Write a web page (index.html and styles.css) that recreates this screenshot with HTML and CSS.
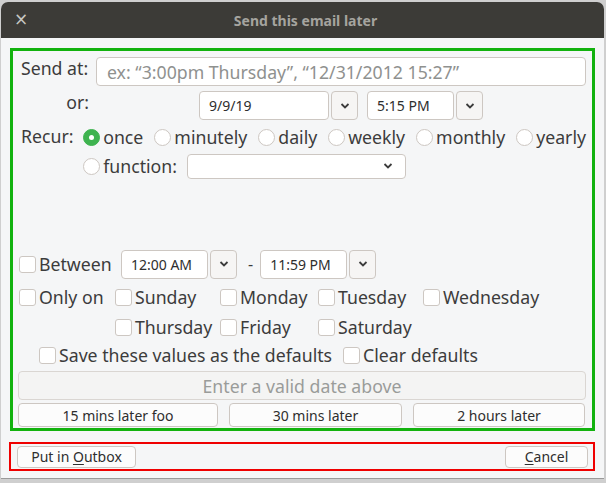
FILE: index.html
```html
<!DOCTYPE html>
<html>
<head>
<meta charset="utf-8">
<link rel="stylesheet" href="styles.css">
</head>
<body>
<div class="window">
  <div class="titlebar">
    <span class="close">×</span>
    <span class="title">Send this email later</span>
  </div>
  <div class="content">
    <div class="green">
      <div class="row row-send">
        <span class="lbl lbl-send">Send at:</span>
        <div class="entry entry-wide"><span class="placeholder">ex: “3:00pm Thursday”, “12/31/2012 15:27”</span></div>
      </div>
      <div class="row row-or">
        <span class="lbl lbl-or">or:</span>
        <div class="combo-group date-group">
          <div class="entry entry-date">9/9/19</div>
          <div class="drop"><svg width="10" height="6" viewBox="0 0 10 6"><path d="M1.5 1 L5 4.5 L8.5 1" fill="none" stroke="#3c3c3c" stroke-width="1.8"/></svg></div>
        </div>
        <div class="combo-group time-group">
          <div class="entry entry-time">5:15 PM</div>
          <div class="drop"><svg width="10" height="6" viewBox="0 0 10 6"><path d="M1.5 1 L5 4.5 L8.5 1" fill="none" stroke="#3c3c3c" stroke-width="1.8"/></svg></div>
        </div>
      </div>
      <div class="row row-recur">
        <span class="lbl lbl-recur">Recur:</span>
        <div class="radios">
          <div class="radio-line">
            <label class="opt"><span class="radio checked"></span><span>once</span></label>
            <label class="opt"><span class="radio"></span><span>minutely</span></label>
            <label class="opt"><span class="radio"></span><span>daily</span></label>
            <label class="opt"><span class="radio"></span><span>weekly</span></label>
            <label class="opt"><span class="radio"></span><span>monthly</span></label>
            <label class="opt"><span class="radio"></span><span>yearly</span></label>
          </div>
          <div class="radio-line line2">
            <label class="opt"><span class="radio"></span><span>function:</span></label>
            <div class="combo-box"><svg width="10" height="6" viewBox="0 0 10 6"><path d="M1.5 1 L5 4.5 L8.5 1" fill="none" stroke="#3c3c3c" stroke-width="1.8"/></svg></div>
          </div>
        </div>
      </div>
      <div class="spacer"></div>
      <div class="row row-between">
        <label class="opt chk-opt"><span class="check"></span><span>Between</span></label>
        <div class="combo-group between-a">
          <div class="entry entry-time small">12:00 AM</div>
          <div class="drop"><svg width="10" height="6" viewBox="0 0 10 6"><path d="M1.5 1 L5 4.5 L8.5 1" fill="none" stroke="#3c3c3c" stroke-width="1.8"/></svg></div>
        </div>
        <span class="dash">-</span>
        <div class="combo-group">
          <div class="entry entry-time small">11:59 PM</div>
          <div class="drop"><svg width="10" height="6" viewBox="0 0 10 6"><path d="M1.5 1 L5 4.5 L8.5 1" fill="none" stroke="#3c3c3c" stroke-width="1.8"/></svg></div>
        </div>
      </div>
      <div class="days">
        <label class="opt"><span class="check"></span><span>Only on</span></label>
        <label class="opt"><span class="check"></span><span>Sunday</span></label>
        <label class="opt"><span class="check"></span><span>Monday</span></label>
        <label class="opt"><span class="check"></span><span>Tuesday</span></label>
        <label class="opt"><span class="check"></span><span>Wednesday</span></label>
        <span></span>
        <label class="opt"><span class="check"></span><span>Thursday</span></label>
        <label class="opt"><span class="check"></span><span>Friday</span></label>
        <label class="opt"><span class="check"></span><span>Saturday</span></label>
        <span></span>
      </div>
      <div class="row row-save">
        <label class="opt"><span class="check"></span><span>Save these values as the defaults</span></label>
        <label class="opt"><span class="check"></span><span>Clear defaults</span></label>
      </div>
      <div class="btn btn-disabled"><span>Enter a valid date above</span></div>
      <div class="row row-quick">
        <div class="btn btn-quick q1"><span>15 mins later foo</span></div>
        <div class="btn btn-quick q2"><span>30 mins later</span></div>
        <div class="btn btn-quick q3"><span>2 hours later</span></div>
      </div>
    </div>
    <div class="red">
      <div class="btn btn-action outbox"><span>Put in <u>O</u>utbox</span></div>
      <div class="btn btn-action cancel"><span><u>C</u>ancel</span></div>
    </div>
  </div>
</div>
</body>
</html>
```

FILE: styles.css
```css
* { box-sizing: border-box; }
html, body { margin: 0; padding: 0; }
body {
  width: 606px;
  height: 483px;
  background: #cfcfcf;
  font-family: "Noto Sans", "Open Sans", sans-serif;
  color: #3c3c3c;
  overflow: hidden;
  padding: 2px 2px 0 1px;
}
.window {
  width: 603px;
  height: 476px;
  background: #f5f6f7;
  border-radius: 7px 7px 0 0;
  overflow: hidden;
  display: flex;
  flex-direction: column;
  box-shadow: 0 1px 0 #9a9a9a;
}
.titlebar {
  height: 36px;
  background: #3c3b37;
  display: flex;
  align-items: center;
  justify-content: center;
  position: relative;
}
.close {
  position: absolute;
  left: 13px;
  top: 7px;
  color: #c8c7c3;
  font-size: 17px;
  font-family: "DejaVu Sans", sans-serif;
}
.title {
  color: #a5a49f;
  font-weight: bold;
  font-size: 14px;
  margin-left: 6px;
  margin-top: 1px;
}
.content {
  padding: 10px 8px 0 9px;
}
.green {
  border: 3px solid #12b20e;
  width: 585px;
  height: 383px;
  padding: 6px 6px 0 5px;
  display: flex;
  flex-direction: column;
}
.row { display: flex; align-items: flex-start; }
.lbl { font-size: 17.7px; }
.lbl-send { width: 78px; padding-left: 3px; line-height: 22px; }
.entry {
  background: #fff;
  border: 1px solid #cdc7c2;
  border-radius: 4px;
  height: 29px;
  display: flex;
  align-items: center;
  font-size: 14px;
  padding-left: 9px;
  color: #2e2e2e;
}
.entry-wide { flex: 1; padding-left: 10px; }
.placeholder { color: #8f918f; font-size: 17.7px; }
.row-or { margin-top: 5px; }
.lbl-or { width: 71px; text-align: right; line-height: 22px; }
.combo-group { display: flex; gap: 2px; }
.date-group { margin-left: 110px; }
.time-group { margin-left: 9px; }
.entry-date { width: 130px; }
.entry-time { width: 87px; }
.drop {
  width: 27px;
  height: 29px;
  border: 1px solid #cdc7c2;
  border-radius: 4px;
  background: #f6f5f4;
  display: flex;
  align-items: center;
  justify-content: center;
}
.row-recur { margin-top: 6px; }
.lbl-recur { width: 67px; padding-left: 3px; line-height: 20px; }
.radios { display: flex; flex-direction: column; }
.radio-line { display: flex; align-items: center; gap: 11px; height: 22px; }
.line2 { margin-top: 5px; height: 26px; gap: 10px; }
.opt {
  display: flex;
  align-items: center;
  font-size: 17.7px;
  white-space: nowrap;
}
.radio {
  width: 17px;
  height: 17px;
  border-radius: 50%;
  border: 1px solid #cdc7c2;
  background: #fff;
  margin-right: 3px;
  flex: none;
}
.radio.checked {
  background: #3eb34f;
  border-color: #3eb34f;
  position: relative;
}
.radio.checked::after {
  content: "";
  position: absolute;
  left: 5px;
  top: 5px;
  width: 5px;
  height: 5px;
  border-radius: 50%;
  background: #fff;
}
.combo-box {
  width: 219px;
  height: 25px;
  border: 1px solid #cdc7c2;
  border-radius: 4px;
  background: #fff;
  display: flex;
  align-items: center;
  justify-content: flex-end;
  padding-right: 12px;
}
.spacer { height: 70px; flex: none; }
.row-between { align-items: center; height: 30px; }
.check {
  width: 17px;
  height: 17px;
  border: 1px solid #cdc7c2;
  border-radius: 3px;
  background: #fff;
  margin-right: 3px;
  flex: none;
}
.chk-opt { width: 103px; padding-left: 1px; }
.entry.small { font-size: 14px; }
.dash { font-size: 16px; margin: 0 7px 0 11px; }
.days {
  display: grid;
  grid-template-columns: 96px 105px 98px 105px 1fr;
  grid-auto-rows: 30px;
  margin-top: 3px;
  padding-left: 1px;
  align-items: center;
}
.row-save { padding-left: 21px; gap: 11px; height: 26px; align-items: center; }
.btn {
  border: 1px solid #cdc7c2;
  border-radius: 4px;
  background: #fcfcfc;
  display: flex;
  align-items: center;
  justify-content: center;
  font-size: 14px;
  color: #2e2e2e;
}
.btn-disabled {
  margin-top: 3px;
  height: 29px;
  background: #f4f4f3;
  border-color: #dad6d2;
  color: #9a9c9a;
  font-size: 17.7px;
}
.row-quick { margin-top: 3px; gap: 11px; }
.btn-quick { height: 24px; }
.q1 { width: 200px; }
.q2 { width: 173px; }
.q3 { width: 172px; }
.red {
  margin-top: 11px;
  border: 2px solid #ef0000;
  width: 586px;
  margin-left: -1px;
  height: 29px;
  display: flex;
  justify-content: space-between;
  align-items: center;
  padding: 0 5px 0 6px;
}
.btn-action { height: 22px; font-size: 14px; }
.outbox { width: 119px; }
.cancel { width: 83px; }
u { text-decoration-thickness: 1px; text-underline-offset: 2px; }
```
